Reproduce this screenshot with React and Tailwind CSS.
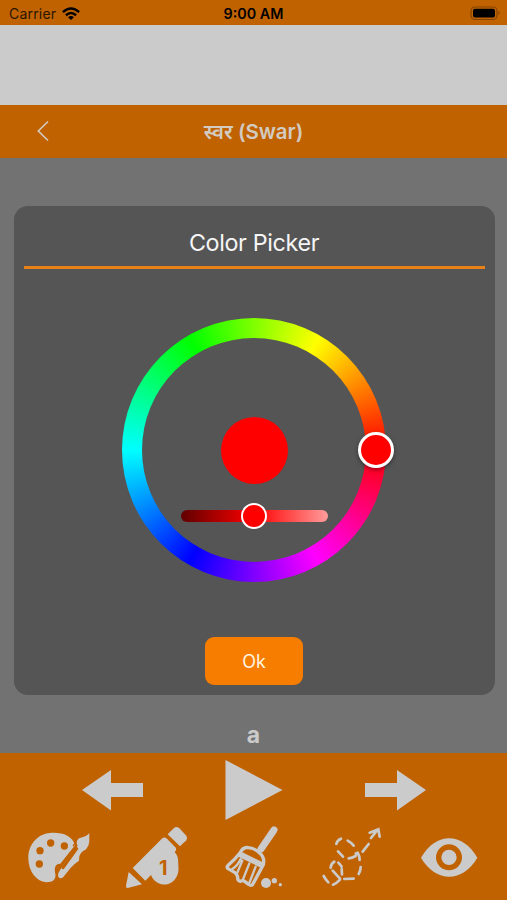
function StatusBar() {
  return (
    <div className="flex h-[25px] shrink-0 items-center justify-between bg-[#c06200] text-black">
      <div className="flex w-[180px] items-center gap-[6px] pl-[9px] pt-[3px] text-[14px] leading-none tracking-[0.2px] text-[#2b1500]">
        <span>Carrier</span>
        <svg className="mb-[2px]" width="18" height="13" viewBox="0 0 18 13" fill="none" stroke="#000" strokeWidth="2.5">
          <path d="M0.9 5.1 Q9 -2.1 17.1 5.1" />
          <path d="M3.9 8.2 Q9 3.8 14.1 8.2" />
          <path d="M6 10.2 Q9 7.7 12 10.2 L9 13 Z" fill="#000" stroke="none" />
        </svg>
      </div>
      <span className="whitespace-nowrap pt-[4px] text-[14.3px] font-semibold leading-none">9:00 AM</span>
      <div className="flex w-[180px] justify-end pr-[6px] pt-[1px]">
        <svg width="31" height="15" viewBox="0 0 31 15">
          <rect x="1" y="1" width="26" height="12.5" rx="4" fill="none" stroke="#854400" strokeWidth="1.2" />
          <rect x="3" y="2.8" width="22" height="8.8" rx="2" fill="#000" />
          <path d="M28.5 5 Q31 7 28.5 9 Z" fill="#854400" />
        </svg>
      </div>
    </div>
  );
}

function Header() {
  return (
    <div className="flex h-[53.5px] shrink-0 items-center bg-[#c06200] text-[#d3cbc2]">
      <div className="w-[107px] pl-[36px]">
        <svg width="14" height="22" viewBox="0 0 14 22" fill="none" stroke="currentColor" strokeWidth="1.6">
          <path d="M12 1.5 L2.3 11 L12 20.5" />
        </svg>
      </div>
      <h1 className="flex-1 pt-[2px] text-center text-[20.4px] font-semibold leading-none">स्वर (Swar)</h1>
      <div className="w-[107px]" />
    </div>
  );
}

function ColorWheel() {
  return (
    <div className="relative mx-auto mt-[49px] size-[264px] rounded-full bg-[conic-gradient(from_90deg,#f00,#f0f,#00f,#0ff,#0f0,#ff0,#f00)] p-[20px]">
      <div className="flex size-full flex-col items-center rounded-full bg-[#555] pt-[79px]">
        <div className="size-[67px] shrink-0 rounded-full bg-[#f00]" />
        <div className="mt-[19px] flex h-[26px] w-[147px] shrink-0 items-center">
          <div className="flex h-[12px] w-full items-center justify-center rounded-full bg-[linear-gradient(to_right,#600000,#f00_50%,#ff9c9c)]">
            <div className="size-[26px] shrink-0 rounded-full border-[2.5px] border-white bg-[#f00]" />
          </div>
        </div>
      </div>
      <div className="absolute left-[236px] top-[114px] size-[36px] rounded-full border-[3.5px] border-white bg-[#f00] shadow-[0_2px_4px_rgba(0,0,0,0.4)]" />
    </div>
  );
}

function PickerDialog() {
  return (
    <div className="ml-[13.5px] h-[488.5px] w-[481px] shrink-0 rounded-[14px] bg-[#555] px-[10px]">
      <h2 className="flex h-[60px] items-center justify-center pt-[12px] text-[23.3px] leading-none tracking-[-0.35px] text-[#f5f5f5]">Color Picker</h2>
      <div className="h-[2.5px] bg-[#e88118]" />
      <ColorWheel />
      <button className="mx-auto mt-[55.5px] flex h-[47.5px] w-[98px] items-center justify-center rounded-[9px] bg-[#f77d00] text-[18px] text-[#fff3e0]">Ok</button>
    </div>
  );
}

function PaletteIcon() {
  return (
    <svg width="90" height="75" viewBox="0 0 270 225" fill="#cbcbcb">
      <path d="M180 76 C172 46 140 36 105 39 C65 42 39 77 40 116 C41 153 62 183 94 187 C115 187 124 177 121 160 C117 143 121 131 136 131 Z" />
      <path d="M223 40 C222 59 227 73 212 89 C202 93 197 98 193 109 L192 122 C182 129 174 135 166 145 L145 171 Q137 178 131 172 Q128 168 130 159 L144 136 L188 77 C181 67 187 54 202 52 Q214 50 223 40 Z" />
      <path d="M185 86 L144 143 M129 139 L125 157" stroke="#c06200" strokeWidth="9" strokeLinecap="round" />
      <path d="M174 78 L182 69" stroke="#c06200" strokeWidth="4" />
      <g fill="#c06200">
        <circle cx="107" cy="69" r="11" />
        <circle cx="148" cy="78" r="11" />
        <circle cx="75" cy="92" r="11" />
        <circle cx="73" cy="132" r="11" />
      </g>
    </svg>
  );
}

function PencilIcon() {
  return (
    <svg width="90" height="75" viewBox="0 0 270 225" fill="#cbcbcb">
      <path d="M142 55 Q149 49 156 56 L183 84 Q186 90 179 97 C189 107 190 117 190 139 A43 47 0 0 1 108 165 L91 182 L53 144 Z" />
      <path d="M158 43 L177 24 Q184 17 193 25 L214 47 Q219 55 214 61 L195 79 Z" />
      <path d="M41 156 L81 193 L38 204 Q32 204 33 197 Z" />
      <text x="145" y="164" textAnchor="middle" fill="#c06200" fontSize="59" fontWeight="700">1</text>
    </svg>
  );
}

function BroomIcon() {
  return (
    <svg width="80" height="75" viewBox="0 0 240 225" fill="none" stroke="#cbcbcb" strokeLinecap="round" strokeLinejoin="round">
      <path d="M177 30 L138 87" strokeWidth="21" />
      <path d="M75 99 Q84 80 100 83 Q119 84 134 99 Q150 113 145 134 L113 193 Q108 199 101 193 L89 184 Q83 180 76 184 Q67 182 68 171 Q66 164 60 158 L39 146 Q33 141 41 134 Q62 116 75 99 Z" strokeWidth="10" />
      <path d="M77 104 L138 134" strokeWidth="17" />
      <path d="M77 117 Q68 137 52 147 M82 122 L67 158 M103 130 L84 178 M122 140 L104 186" strokeWidth="7" />
      <g fill="#cbcbcb" stroke="none">
        <circle cx="153" cy="189" r="15" />
        <circle cx="178" cy="182" r="8" />
        <circle cx="196" cy="194" r="5" />
      </g>
    </svg>
  );
}

function TraceIcon() {
  return (
    <svg width="80" height="75" viewBox="0 0 240 225" fill="none" stroke="#cbcbcb" strokeWidth="8" strokeLinecap="round">
      <path d="M41 168 Q47 179 55 187 M69 194 Q79 191 90 179 M103 177 L131 176 M146 162 Q152 153 152 141 M149 120 Q149 107 143 98 M137 101 L145 102 M116 115 Q126 114 137 108 M99 110 L84 94 M79 72 Q81 61 93 56 M113 62 Q124 68 131 77 M158 95 L176 72 M183 54 L203 29 M179 38 L205 28 L209 50" />
      <path d="M62 143 Q62 133 73 125 M85 128 Q91 134 95 140 M68 152 L90 176 M95 147 L96 163" />
    </svg>
  );
}

function EyeIcon() {
  return (
    <svg width="80" height="75" viewBox="0 0 240 225">
      <path d="M33 113 C77 35 158 35 202 113 C158 189 77 189 33 113 Z" fill="#cbcbcb" />
      <circle cx="117" cy="112" r="31" fill="none" stroke="#c06200" strokeWidth="16" />
    </svg>
  );
}

function Toolbar() {
  return (
    <div className="h-[147px] shrink-0 bg-[#c06200]">
      <div className="flex h-[67px] items-start pl-[82px] pt-[7px]">
        <svg className="mt-[10px]" width="61" height="41" viewBox="0 0 61 41" fill="#cbcbcb">
          <path d="M0 20 L29 0 V13 H61 V27 H29 V40.5 Z" />
        </svg>
        <svg className="ml-[82px]" width="58" height="60" viewBox="0 0 58 60" fill="#cbcbcb">
          <path d="M0.5 0 L57.5 30 L0.5 60 Z" />
        </svg>
        <svg className="ml-[82px] mt-[10px]" width="61" height="41" viewBox="0 0 61 41" fill="#cbcbcb">
          <path d="M61 20 L32 0 V13 H0 V27 H32 V40.5 Z" />
        </svg>
      </div>
      <div className="flex pl-[15px]">
        <PaletteIcon />
        <div className="ml-[10px]"><PencilIcon /></div>
        <div className="ml-[10px]"><BroomIcon /></div>
        <div className="ml-[15px]"><TraceIcon /></div>
        <div className="ml-[20px]"><EyeIcon /></div>
      </div>
    </div>
  );
}

export default function App() {
  return (
    <div className="flex h-[900px] w-[507px] flex-col overflow-hidden bg-[#727272] font-[Inter,'Noto_Sans',sans-serif]">
      <StatusBar />
      <div className="h-[79.5px] shrink-0 bg-[#cbcbcb]" />
      <Header />
      <div className="flex flex-1 flex-col pt-[48.3px]">
        <PickerDialog />
        <div className="flex flex-1 items-center justify-center pt-[24px] text-[23px] font-bold leading-none text-[#cbcbcb]">a</div>
      </div>
      <Toolbar />
    </div>
  );
}
